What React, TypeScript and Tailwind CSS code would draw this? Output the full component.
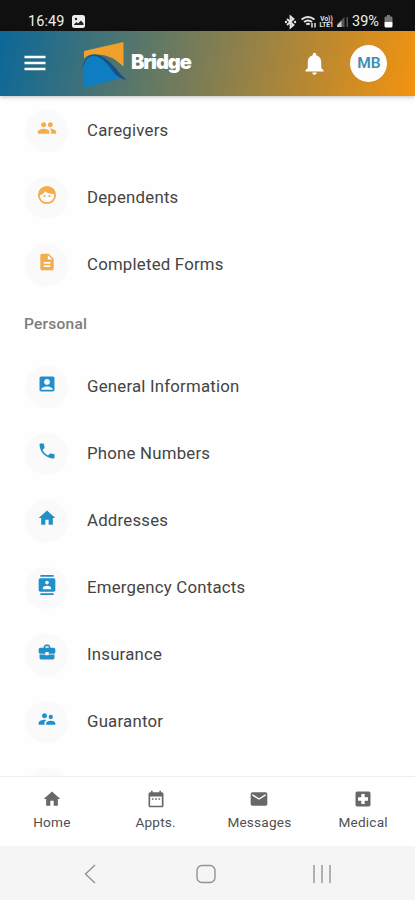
import type { ComponentType } from "react";
import {
  MdAccountBox,
  MdBusinessCenter,
  MdContacts,
  MdDateRange,
  MdDescription,
  MdHome,
  MdLocalHospital,
  MdMail,
  MdNotifications,
  MdPhone,
} from "react-icons/md";

type Icon = ComponentType<{ className?: string }>;
type Item = { label: string; icon: Icon };

function PeopleIcon({ className }: { className?: string }) {
  return (
    <svg className={className} viewBox="0 0 24 24" fill="currentColor">
      <path d="M16 11c1.66 0 2.99-1.34 2.99-3S17.66 5 16 5c-1.66 0-3 1.34-3 3s1.34 3 3 3zm-8 0c1.66 0 2.99-1.34 2.99-3S9.66 5 8 5C6.34 5 5 6.34 5 8s1.34 3 3 3zm0 2c-2.33 0-7 1.170-7 3.500V19h14v-2.500c0-2.330-4.670-3.500-7-3.500zm8 0c-.29 0-.62.020-.97.050 1.160.84 1.970 1.970 1.970 3.450V19h6v-2.500c0-2.330-4.670-3.500-7-3.500z" />
    </svg>
  );
}

function FaceIcon({ className }: { className?: string }) {
  return (
    <svg className={className} viewBox="0 0 24 24" fill="currentColor">
      <circle cx="12" cy="12" r="9.800" fill="none" stroke="currentColor" strokeWidth="2.200" />
      <path d="M2.500 12.500Q7.500 11.500 9.500 7.500Q14 11.800 21.500 10.500Q19.500 2 12 2T2.500 12.500Z" />
      <circle cx="9" cy="13.200" r="1.300" />
      <circle cx="15" cy="13.200" r="1.300" />
    </svg>
  );
}

function GuarantorIcon({ className }: { className?: string }) {
  return (
    <svg className={className} viewBox="0 0 24 24" fill="currentColor">
      <path d="M16.500 12c1.380 0 2.490-1.120 2.490-2.500S17.880 7 16.500 7C15.120 7 14 8.120 14 9.500s1.120 2.500 2.500 2.500zM9 11c1.660 0 2.990-1.340 2.990-3S10.660 5 9 5C7.340 5 6 6.340 6 8s1.340 3 3 3zm7.500 3c-1.830 0-5.500.92-5.500 2.750V19h11v-2.250c0-1.830-3.670-2.750-5.500-2.750zM9 13c-2.330 0-7 1.170-7 3.500V19h7v-2.250c0-.85.330-2.340 2.370-3.470C10.500 13.100 9.660 13 9 13z" />
    </svg>
  );
}

const account: Item[] = [
  { label: "Caregivers", icon: PeopleIcon },
  { label: "Dependents", icon: FaceIcon },
  { label: "Completed Forms", icon: MdDescription },
];

const personal: Item[] = [
  { label: "General Information", icon: MdAccountBox },
  { label: "Phone Numbers", icon: MdPhone },
  { label: "Addresses", icon: MdHome },
  { label: "Emergency Contacts", icon: MdContacts },
  { label: "Insurance", icon: MdBusinessCenter },
  { label: "Guarantor", icon: GuarantorIcon },
];

const tabs: Item[] = [
  { label: "Home", icon: MdHome },
  { label: "Appts.", icon: MdDateRange },
  { label: "Messages", icon: MdMail },
  { label: "Medical", icon: MdLocalHospital },
];

function Row({ item, color }: { item: Item; color: string }) {
  const Glyph = item.icon;
  return (
    <div className="flex h-[67px] shrink-0 items-center pt-[3px] pl-[25px]">
      <div className="flex h-[42px] w-[43px] items-center justify-center rounded-full bg-[#fafafa] pb-[6px]">
        <Glyph className={`size-5 ${color}`} />
      </div>
      <span className="ml-[19px] text-[16.8px] tracking-[0.22px] text-[#444444]">{item.label}</span>
    </div>
  );
}

function StatusIcons() {
  return (
    <div className="flex h-4 items-center">
      <svg width="33" height="16" viewBox="0 0 33 16" fill="none" stroke="#e6e6e6">
        <path d="M3 5l6.500 6L6.500 13.500V2.500L9.500 5L3 11" strokeWidth="1.800" />
        <circle cx="2" cy="8" r="1.200" fill="#e6e6e6" stroke="none" />
        <circle cx="11" cy="8" r="1.200" fill="#e6e6e6" stroke="none" />
        <path d="M17.500 5.500Q24 0.500 30.500 5.500M20 8Q24 4.800 28 8M22.300 10.500Q24 9 25.700 10.500" strokeWidth="1.900" />
        <path d="M28 9v4.500M31 13.500v-4.500" strokeWidth="1.500" />
      </svg>
      <div className="flex w-[19px] flex-col items-center text-[6.5px] leading-[6px] font-bold text-[#e6e6e6]">
        <span className="block h-[6px]">Vo))</span>
        <span className="block h-[6px]">LTE1</span>
      </div>
      <svg width="14" height="16" viewBox="52 0 14 16">
        <path d="M53 13V10L60.500 3V13ZM62.500 3H64V13H62.500Z" fill="#555" />
        <path d="M53 13V11.500L57.500 7V13Z" fill="#ccc" />
      </svg>
    </div>
  );
}

export default function App() {
  return (
    <div className="flex h-[900px] w-[415px] flex-col overflow-hidden bg-[#fefefe] font-['Roboto',sans-serif]">
      <div className="flex h-[31px] shrink-0 items-center bg-[#101010] pt-[12px] pl-[28px] text-[14.5px] text-[#ededed]">
        <span className="w-[38px] tracking-[0.1px]">16:49</span>
        <svg className="ml-[6px]" width="13" height="13" viewBox="0 0 13 13">
          <rect width="13" height="13" rx="2.500" fill="#ededed" />
          <path d="M2 9.500L4.500 7L6 8.500L9 5.500L11.500 8.500V10H2Z" fill="#222" />
          <circle cx="4" cy="4" r="1.200" fill="#222" />
        </svg>
        <div className="ml-[199px] flex items-center">
          <StatusIcons />
        </div>
        <span className="ml-[2px] w-[31px] whitespace-nowrap">39%</span>
        <svg className="ml-px" width="9" height="13" viewBox="0 0 9 13">
          <path d="M3 0H6V1.500H7.500Q8.500 1.500 8.500 3V7H0.500V3Q0.500 1.500 1.500 1.500H3Z" fill="#777" />
          <path d="M0.500 7H8.500V11Q8.500 12.500 7 12.500H2Q0.500 12.500 0.500 11Z" fill="#fff" />
        </svg>
      </div>

      <header className="z-10 flex h-[65px] shrink-0 items-center bg-[linear-gradient(102deg,#0b6898_0%,#f3930f_100%)] pl-[24px] shadow-[0_1px_4px_rgba(0,0,0,0.25)]">
        <svg className="mb-[2px]" width="22" height="16" viewBox="0 0 22 16" stroke="#fff" strokeWidth="2.500">
          <path d="M0.500 2H21.500M0.500 8H21.500M0.500 14H21.500" />
        </svg>
        <svg className="ml-[35px]" width="48" height="49" viewBox="0 0 48 49">
          <path d="M3 12L42.500 3V27.500Q30 15.500 17 15.500Q8 14.500 3 19.500Z" fill="#f2a02c" />
          <path d="M1 30Q4 15.500 13 15.500Q23 15.500 34 28.500Q39 35.500 46 41.500Q38 40 30 31Q22 18 13 17Q6 17.500 1 30Z" fill="#174f87" />
          <path d="M2.500 28Q5 16.800 13 16.800Q21.500 17.500 30.500 30.500Q34 36.500 38.500 39.500L3 48.500Z" fill="#0e7ec2" />
        </svg>
        <span className="mb-[3px] ml-[2px] w-[62px] font-['Inter',sans-serif] text-[20px] leading-none font-black tracking-[-1px] text-white">Bridge</span>
        <MdNotifications className="ml-[108px] size-[27px] text-white" />
        <div className="ml-[21.5px] flex size-[37px] items-center justify-center rounded-full bg-[#fdfdfd] pl-[2px] text-[15.5px] font-semibold text-[#3d8fb2]">MB</div>
      </header>

      <main className="flex min-h-0 flex-1 flex-col overflow-hidden">
        {account.map((item) => (
          <Row key={item.label} item={item} color="text-[#f4ad4c]" />
        ))}
        <h2 className="flex h-[55px] shrink-0 items-center pl-[24px] text-[15.5px] font-medium tracking-[0.25px] text-[#7c7c7c]">Personal</h2>
        {personal.map((item) => (
          <Row key={item.label} item={item} color="text-[#218fca]" />
        ))}
        <div className="mt-[14px] ml-[25px] h-[42px] w-[43px] shrink-0 rounded-full bg-[#fafafa]" />
      </main>

      <nav className="grid h-[70px] shrink-0 grid-cols-4 border-t border-[#eeeeee] bg-white">
        {tabs.map(({ label, icon: Glyph }) => (
          <div key={label} className="flex flex-col items-center pt-[12px]">
            <Glyph className="size-5 text-[#686868]" />
            <span className="mt-[3px] text-[13.6px] leading-5 tracking-[0.2px] text-[#505050]">{label}</span>
          </div>
        ))}
      </nav>

      <div className="flex h-[54px] shrink-0 items-center bg-[#f5f5f5] pt-[2px] pl-[84px]">
        <svg width="248" height="20" viewBox="0 0 248 20" fill="none" stroke="#929292" strokeWidth="1.400">
          <path d="M11 1L1.500 10L11 19" />
          <rect x="113" y="1.500" width="18" height="17" rx="5" />
          <path d="M230 1V19M238 1V19M246 1V19" strokeWidth="2" stroke="#b0b0b0" />
        </svg>
      </div>
    </div>
  );
}
